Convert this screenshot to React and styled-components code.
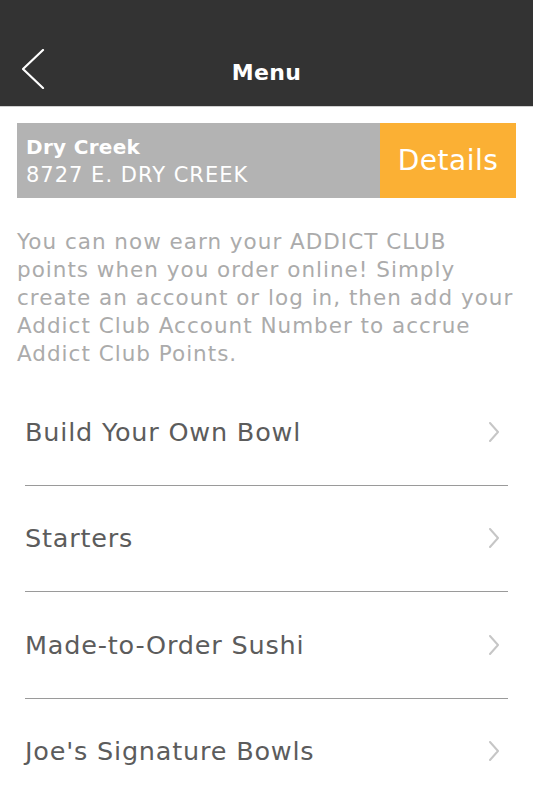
import React from 'react';
import styled, { createGlobalStyle } from 'styled-components';

const GlobalStyle = createGlobalStyle`
  html, body {
    margin: 0;
    padding: 0;
    background: #fff;
  }
  body {
    font-family: "DejaVu Sans", "Open Sans", sans-serif;
  }
`;

const Page = styled.div`
  width: 533px;
  height: 800px;
  overflow: hidden;
  background: #fff;
`;

const Header = styled.header`
  height: 107px;
  background: #333333;
  border-bottom: 1px solid #cfcfcf;
  display: grid;
  grid-template-columns: 70px 1fr 70px;
  align-items: center;
  padding-top: 38px;
  box-sizing: border-box;
`;

const BackButton = styled.button`
  background: none;
  border: none;
  padding: 0 0 0 22px;
  margin-top: -6px;
  display: flex;
  align-items: center;
  cursor: pointer;
`;

const Title = styled.h1`
  margin: 0;
  text-align: center;
  color: #fff;
  font-size: 22px;
  font-weight: 600;
  letter-spacing: 0.3px;
`;

const Body = styled.main`
  padding: 16px 17px 0;
`;

const LocationBar = styled.div`
  display: flex;
  height: 75px;
  background: #b3b3b3;
`;

const LocationInfo = styled.div`
  flex: 1;
  display: flex;
  flex-direction: column;
  justify-content: center;
  padding-left: 9px;
  color: #fff;
`;

const LocationName = styled.span`
  font-size: 20px;
  font-weight: bold;
  line-height: 28px;
  letter-spacing: 0.3px;
`;

const LocationAddress = styled.span`
  font-size: 21px;
  line-height: 28px;
  letter-spacing: 1px;
`;

const DetailsButton = styled.button`
  width: 136px;
  border: none;
  background: #fbb034;
  color: #fff;
  font-family: inherit;
  font-size: 28px;
  letter-spacing: 0.5px;
  padding: 0;
  cursor: pointer;
`;

const Notice = styled.p`
  margin: 30px -6px 0 0;
  color: #ababab;
  font-size: 21.5px;
  line-height: 28px;
  letter-spacing: 1px;
`;

const MenuList = styled.ul`
  list-style: none;
  margin: 11px 8px 0;
  padding: 0;
`;

const MenuItem = styled.li`
  height: 105.5px;
  display: flex;
  align-items: center;
  justify-content: space-between;
  border-bottom: 1px solid #9a9a9a;
  color: #5c5c5c;
  font-size: 25.5px;
  letter-spacing: 0.8px;
  padding-right: 8px;
`;

const BackChevron = () => (
  <svg width="23" height="40" viewBox="0 0 23 40" fill="none">
    <polyline
      points="21,1 1,20 21,39"
      stroke="#fff"
      strokeWidth="2.2"
      strokeLinecap="round"
      strokeLinejoin="round"
    />
  </svg>
);

const RightChevron = () => (
  <svg width="12" height="20" viewBox="0 0 12 20" fill="none">
    <polyline
      points="2,1 10,10 2,19"
      stroke="#c6c6c6"
      strokeWidth="2"
      strokeLinecap="round"
      strokeLinejoin="round"
    />
  </svg>
);

const items = [
  'Build Your Own Bowl',
  'Starters',
  'Made-to-Order Sushi',
  "Joe's Signature Bowls",
];

const App = () => (
  <Page>
    <GlobalStyle />
    <Header>
      <BackButton aria-label="Back">
        <BackChevron />
      </BackButton>
      <Title>Menu</Title>
      <span />
    </Header>
    <Body>
      <LocationBar>
        <LocationInfo>
          <LocationName>Dry Creek</LocationName>
          <LocationAddress>8727 E. DRY CREEK</LocationAddress>
        </LocationInfo>
        <DetailsButton>Details</DetailsButton>
      </LocationBar>
      <Notice>
        You can now earn your ADDICT CLUB points when you order online! Simply
        create an account or log in, then add your Addict Club Account Number
        to accrue Addict Club Points.
      </Notice>
      <MenuList>
        {items.map(item => (
          <MenuItem key={item}>
            {item}
            <RightChevron />
          </MenuItem>
        ))}
      </MenuList>
    </Body>
  </Page>
);

export default App;
